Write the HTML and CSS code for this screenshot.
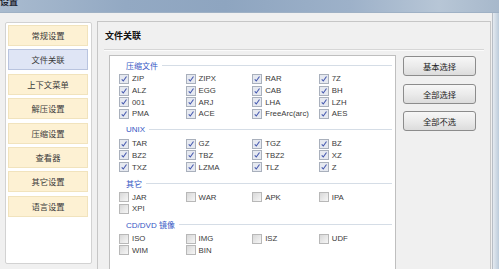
FILE: index.html
```html
<!DOCTYPE html>
<html lang="zh-CN">
<head>
    <meta charset="UTF-8">
    <title>设置</title>
    <link rel="stylesheet" href="styles.css">
</head>
<body>
    <div class="titlebar"><span class="title">设置</span></div>

    <div class="win">
        <div class="client">
            <div class="sidebar">
                <div class="nav-btn">常规设置</div>
                <div class="nav-btn active">文件关联</div>
                <div class="nav-btn">上下文菜单</div>
                <div class="nav-btn">解压设置</div>
                <div class="nav-btn">压缩设置</div>
                <div class="nav-btn">查看器</div>
                <div class="nav-btn">其它设置</div>
                <div class="nav-btn">语言设置</div>
            </div>

            <div class="panel">
                <div class="panel-head">文件关联</div>
                <div class="panel-sep"></div>
                <div class="panel-body">
                    <div class="assoc">
                        <div class="group">
                            <div class="group-title"><span>压缩文件</span></div>
                            <div class="grid">
                                <label class="chk on"><i></i>ZIP</label>
                                <label class="chk on"><i></i>ZIPX</label>
                                <label class="chk on"><i></i>RAR</label>
                                <label class="chk on"><i></i>7Z</label>
                                <label class="chk on"><i></i>ALZ</label>
                                <label class="chk on"><i></i>EGG</label>
                                <label class="chk on"><i></i>CAB</label>
                                <label class="chk on"><i></i>BH</label>
                                <label class="chk on"><i></i>001</label>
                                <label class="chk on"><i></i>ARJ</label>
                                <label class="chk on"><i></i>LHA</label>
                                <label class="chk on"><i></i>LZH</label>
                                <label class="chk on"><i></i>PMA</label>
                                <label class="chk on"><i></i>ACE</label>
                                <label class="chk on"><i></i>FreeArc(arc)</label>
                                <label class="chk on"><i></i>AES</label>
                            </div>
                        </div>

                        <div class="group">
                            <div class="group-title"><span>UNIX</span></div>
                            <div class="grid">
                                <label class="chk on"><i></i>TAR</label>
                                <label class="chk on"><i></i>GZ</label>
                                <label class="chk on"><i></i>TGZ</label>
                                <label class="chk on"><i></i>BZ</label>
                                <label class="chk on"><i></i>BZ2</label>
                                <label class="chk on"><i></i>TBZ</label>
                                <label class="chk on"><i></i>TBZ2</label>
                                <label class="chk on"><i></i>XZ</label>
                                <label class="chk on"><i></i>TXZ</label>
                                <label class="chk on"><i></i>LZMA</label>
                                <label class="chk on"><i></i>TLZ</label>
                                <label class="chk on"><i></i>Z</label>
                            </div>
                        </div>

                        <div class="group">
                            <div class="group-title"><span>其它</span></div>
                            <div class="grid">
                                <label class="chk"><i></i>JAR</label>
                                <label class="chk"><i></i>WAR</label>
                                <label class="chk"><i></i>APK</label>
                                <label class="chk"><i></i>IPA</label>
                                <label class="chk"><i></i>XPI</label>
                            </div>
                        </div>

                        <div class="group">
                            <div class="group-title"><span>CD/DVD 镜像</span></div>
                            <div class="grid">
                                <label class="chk"><i></i>ISO</label>
                                <label class="chk"><i></i>IMG</label>
                                <label class="chk"><i></i>ISZ</label>
                                <label class="chk"><i></i>UDF</label>
                                <label class="chk"><i></i>WIM</label>
                                <label class="chk"><i></i>BIN</label>
                            </div>
                        </div>
                    </div>

                    <div class="actions">
                        <div class="btn">基本选择</div>
                        <div class="btn">全部选择</div>
                        <div class="btn">全部不选</div>
                    </div>
                </div>
            </div>
        </div>
        <div class="frame"></div>
    </div>
</body>
</html>
```

FILE: styles.css
```css
html, body {
    margin: 0;
    padding: 0;
    width: 499px;
    height: 269px;
    overflow: hidden;
    background: #f0f0f0;
    font-family: "Liberation Sans", "Noto Sans CJK SC", sans-serif;
    color: #222;
}

.titlebar {
    height: 12px;
    overflow: hidden;
    border-bottom: 1px solid #9fb1c5;
    background: linear-gradient(to right, #a9bbcf 0%, #93a9c3 25%, #8ea5c0 45%, #9db1c9 70%, #b7c6d6 88%, #a7b8cb 100%);
}
.title {
    display: block;
    margin-top: -4px;
    font-family: "Noto Sans CJK SC", sans-serif;
    font-size: 9px;
    line-height: 12px;
    font-weight: bold;
    color: #1e2530;
}

.win {
    display: flex;
    height: 256px;
    overflow: hidden;
}
.client {
    width: 493px;
    display: flex;
    align-items: flex-start;
    padding: 8px 0 0 5px;
    box-sizing: border-box;
}
.frame {
    width: 6px;
    border-left: 1px solid #b8bec6;
    background: linear-gradient(to right, #e4eaf0, #bccbda);
}

/* left navigation */
.sidebar {
    width: 87px;
    height: 242px;
    margin-top: 1px;
    box-sizing: border-box;
    padding: 2px 0 0 2px;
    background: #fff;
    border: 1px solid #d2d2d2;
    border-radius: 2px;
}
.nav-btn {
    width: 80px;
    height: 21px;
    margin-bottom: 3.4px;
    box-sizing: border-box;
    border: 1px solid #f1e3bd;
    background: #fdf1d3;
    font-family: "Noto Sans CJK SC", sans-serif;
    font-size: 8.3px;
    line-height: 19px;
    text-align: center;
    color: #3a3a3a;
}
.nav-btn.active {
    background: #dfe5f5;
    border-color: #b9c4df;
}

/* right panel */
.panel {
    width: 394px;
    height: 248px;
    margin-left: 5px;
    box-sizing: border-box;
    overflow: hidden;
    border: 1px solid #c6c6c6;
    border-bottom: none;
    background: #f0f0f0;
}
.panel-head {
    height: 27px;
    padding-left: 7px;
    font-family: "Noto Sans CJK SC", sans-serif;
    font-size: 9px;
    font-weight: bold;
    line-height: 27px;
    color: #111;
}
.panel-sep {
    height: 0;
    margin: 0 6px;
    border-top: 1px solid #d6d6d6;
    border-bottom: 1px solid #fbfbfb;
}
.panel-body {
    display: flex;
    align-items: flex-start;
    padding: 4px 0 0 11px;
}

.assoc {
    width: 287px;
    height: 216px;
    box-sizing: border-box;
    padding: 2px 0 0 9px;
    background: #fff;
    border: 1px solid #bfbfbf;
    border-bottom: none;
}
.group {
    margin-bottom: 3.2px;
}
.group-title {
    display: flex;
    align-items: center;
    height: 14px;
    margin: 0 3px 1px 7px;
    font-size: 8px;
    color: #3556c4;
}
.group-title::after {
    content: "";
    flex: 1;
    height: 1px;
    margin-left: 4px;
    background: #d5dde6;
}
.grid {
    display: grid;
    grid-template-columns: repeat(4, 66.6px);
}
.chk {
    display: flex;
    align-items: center;
    height: 11.7px;
    font-size: 7.8px;
    color: #3a3a3a;
    white-space: nowrap;
}
.chk i {
    width: 10px;
    height: 10px;
    margin-right: 3px;
    box-sizing: border-box;
    border: 1px solid #b8b8b8;
    background: linear-gradient(135deg, #d8d8d8, #f6f6f6);
    flex: none;
}
.chk.on i {
    border-color: #a9b0bc;
    background: #e6e9f0 url("data:image/svg+xml;utf8,<svg xmlns='http://www.w3.org/2000/svg' width='8' height='8' viewBox='0 0 8 8'><path d='M1.7 4.3 L3.3 6 L6.5 1.5' fill='none' stroke='%23475ab0' stroke-width='1.1'/></svg>") center no-repeat;
}

.actions {
    padding: 1px 0 0 7px;
}
.btn {
    width: 73px;
    height: 20px;
    margin-bottom: 7.5px;
    box-sizing: border-box;
    border: 1px solid #8c8c8c;
    border-radius: 3px;
    background: linear-gradient(#f7f7f7, #ebebeb 50%, #dcdcdc);
    font-family: "Noto Sans CJK SC", sans-serif;
    font-size: 8.3px;
    line-height: 18px;
    text-align: center;
    color: #222;
}
```
